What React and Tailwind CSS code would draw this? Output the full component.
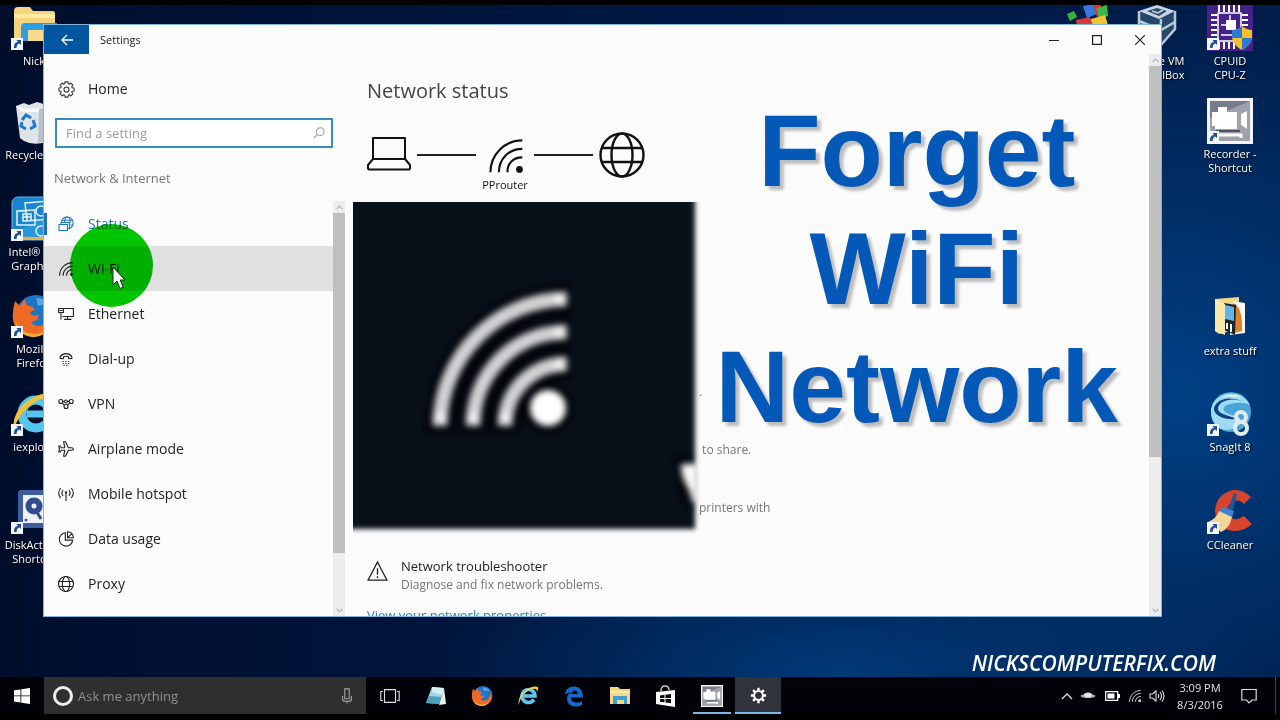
import React from "react";

function WifiIcon({ className, dot = 5, sw = 4 }) {
  return (
    <svg viewBox="0 0 48 48" className={className} fill="none" stroke="currentColor" strokeWidth={sw}>
      <path d="M2 47C2 22 22 2 47 2" />
      <path d="M14 47C14 28 28 14 47 14" />
      <path d="M26 47C26 34 34 26 47 26" />
      <circle cx="43" cy="43" r={dot} fill="currentColor" stroke="none" />
    </svg>
  );
}

function GlobeIcon({ className, sw = 1 }) {
  return (
    <svg viewBox="0 0 46 46" className={className} fill="none" stroke="currentColor" strokeWidth={sw}>
      <circle cx="23" cy="23" r="21.5" />
      <ellipse cx="23" cy="23" rx="10.5" ry="21.5" />
      <path d="M3 16h40M3 30h40" />
    </svg>
  );
}

function GearIcon({ className, teeth = 8, sw = 1.2, hole = 2.6 }) {
  const pts = [];
  for (let i = 0; i < teeth; i++) {
    const a = (i * 2 * Math.PI) / teeth - Math.PI / 2;
    [[-0.3, 5.6], [-0.2, 7.3], [0.2, 7.3], [0.3, 5.6]].forEach(([d, r]) => {
      pts.push(`${(8 + r * Math.cos(a + d)).toFixed(2)},${(8 + r * Math.sin(a + d)).toFixed(2)}`);
    });
  }
  return (
    <svg viewBox="0 0 16 16" className={className} fill="none" stroke="currentColor" strokeWidth={sw} strokeLinejoin="round">
      <polygon points={pts.join(" ")} />
      <circle cx="8" cy="8" r={hole} />
    </svg>
  );
}

function CogIcon({ className }) {
  return (
    <svg viewBox="0 0 20 20" className={className} fill="none" stroke="currentColor">
      <circle cx="10" cy="10" r="5.2" strokeWidth="2.4" />
      <g strokeWidth="2.8">
        <path d="M10 1v3.500M10 15.500V19M1 10h3.500M15.500 10H19" />
        <path d="M3.600 3.600l2.500 2.500M13.900 13.900l2.500 2.500M16.400 3.600l-2.500 2.500M6.100 13.900l-2.500 2.500" />
      </g>
    </svg>
  );
}

const navIcons = {
  status: (
    <svg viewBox="0 0 16 16" className="size-4" fill="none" stroke="currentColor" strokeWidth="1.1">
      <path d="M3.200 6.500C3.800 3.200 6.400 1 9.300 1c3.300 0 5.800 2.500 5.800 5.700 0 2.600-1.200 4.600-3.300 5.500" />
      <path d="M6.300 6.500C6.800 3 8.100 1 9.300 1c1.600 0 3 2.600 3 5.700M4 4.300h10.500M12.500 9h2.200" />
      <path d="M3 6.500h8.500v6H9.500M1 8.500h8.500v6H1zM3 8.500v-2" />
    </svg>
  ),
  wifi: <WifiIcon className="size-3.5" sw={3.8} dot={5} />,
  ethernet: (
    <svg viewBox="0 0 16 16" className="size-4" fill="none" stroke="currentColor" strokeWidth="1.1">
      <path d="M6 2.500h9.400v8H4.500M9.500 10.500V13M6 13.400h7.500" />
      <path d="M.6 2.500h4.800v4H.6zM3 6.500v7M1.600 4.500h2.800" />
    </svg>
  ),
  dialup: (
    <svg viewBox="0 0 16 16" className="size-4" fill="none" stroke="currentColor" strokeWidth="1.1">
      <path d="M2.200 7.400V5.600C3.600 3.600 5.600 2.600 8 2.600s4.400 1 5.800 3v1.800l-3 .2-.4-1.900c-1.500-.5-3.300-.5-4.800 0l-.4 1.900z" />
      <path d="M4.500 10.500h7M4.500 12.500h7M5.500 14.400h5" strokeDasharray="1.200 1.600" />
    </svg>
  ),
  vpn: (
    <svg viewBox="0 0 16 16" className="size-4" fill="none" stroke="currentColor" strokeWidth="1.1">
      <circle cx="2.800" cy="5.500" r="2" />
      <circle cx="13.200" cy="5.500" r="2" />
      <circle cx="8" cy="5.500" r="1.500" />
      <circle cx="8" cy="10.500" r="2" />
      <path d="M5 5.500h1.500M9.500 5.500H11M4.300 7l2.200 2.400M11.700 7 9.500 9.400" />
    </svg>
  ),
  airplane: (
    <svg viewBox="0 0 16 16" className="size-4" fill="none" stroke="currentColor" strokeWidth="1.1" strokeLinejoin="round">
      <path d="M15.400 8c0-.8-.8-1.300-1.800-1.300H10.400L7.500.8H5.600l1.200 5.900H3.400L2.200 5H.7l.8 3-.8 3h1.500l1.200-1.700h3.400l-1.200 5.900h1.900l2.900-5.900h3.200c1 0 1.800-.5 1.800-1.300z" />
    </svg>
  ),
  hotspot: (
    <svg viewBox="0 0 16 16" className="size-4" fill="none" stroke="currentColor" strokeWidth="1.1">
      <path d="M2.700 12C.3 9 .3 5 2.700 2M5 10C3.700 8.200 3.700 5.800 5 4M11 10c1.300-1.800 1.300-4.200 0-6M13.300 12c2.400-3 2.400-7 0-10M8 7v8" />
      <circle cx="8" cy="6.500" r=".6" fill="currentColor" />
    </svg>
  ),
  data: (
    <svg viewBox="0 0 16 16" className="size-4" fill="none" stroke="currentColor" strokeWidth="1.1">
      <path d="M7.300 1.800a6.700 6.700 0 1 0 7.400 7.300H7.300z" />
      <path d="M9.500.8c3.300.3 5.600 2.600 5.900 5.900H9.500zM9.500 6.700l4.300-3.900" />
    </svg>
  ),
  proxy: <GlobeIcon className="size-4" sw={3.2} />,
};

const navItems = [
  ["status", "Status"],
  ["wifi", "Wi-Fi"],
  ["ethernet", "Ethernet"],
  ["dialup", "Dial-up"],
  ["vpn", "VPN"],
  ["airplane", "Airplane mode"],
  ["hotspot", "Mobile hotspot"],
  ["data", "Data usage"],
  ["proxy", "Proxy"],
];

function NavRow({ id, label }) {
  const tone = id === "status" ? "text-[#1f7ac0]" : "text-[#222]";
  const bg = id === "wifi" ? "bg-[#e0e0e0]" : "";
  const marker = id === "status" ? "bg-[#1f6fb5]" : "";
  return (
    <li>
      <a href={"#" + id} className={`flex h-[45px] items-center text-sm ${tone} ${bg}`}>
        <span className={`h-[22px] w-[3px] ${marker}`} />
        <span className="mr-[14px] ml-[11px] flex w-4 justify-center">{navIcons[id]}</span>
        {label}
      </a>
    </li>
  );
}

function Chevron({ up }) {
  return (
    <svg viewBox="0 0 10 6" className="h-[5px] w-[7px]" fill="none" stroke="#888" strokeWidth="1.4">
      <path d={up ? "M1 5l4-4 4 4" : "M1 1l4 4 4-4"} />
    </svg>
  );
}

function ScrollBar({ thumb }) {
  return (
    <div className="flex w-[12px] shrink-0 flex-col items-center bg-[#ececec]">
      <div className="flex h-3 shrink-0 items-center"><Chevron up /></div>
      <div className={`w-full bg-[#bfbfbf] ${thumb}`} />
      <div className="min-h-0 flex-1" />
      <div className="flex h-3 shrink-0 items-center"><Chevron /></div>
    </div>
  );
}

function Sidebar() {
  return (
    <aside className="flex w-[301px] shrink-0 flex-col">
      <a href="#home" className="mt-[23px] flex h-6 items-center gap-[13px] pl-[14px] text-sm text-[#222]">
        <GearIcon className="size-[17px] text-[#333]" sw={1} hole={2.4} />
        Home
      </a>
      <label className="mt-[17px] ml-[11px] flex h-[30px] w-[278px] items-center border-2 border-[#3a8ac4] bg-white pl-[9px]">
        <input type="text" placeholder="Find a setting" aria-label="Find a setting" className="h-6 min-w-0 flex-1 bg-transparent text-[13px] leading-6 outline-none placeholder:text-[#9b9b9b]" />
        <svg viewBox="0 0 14 14" className="mr-1.5 size-3" fill="none" stroke="#999" strokeWidth="1.2">
          <circle cx="8.500" cy="5.500" r="4.500" />
          <path d="M5.300 8.700 1 13" />
        </svg>
      </label>
      <h2 className="mt-[19px] pl-[10px] text-[13px] leading-[22px] text-[#777]">Network &amp; Internet</h2>
      <div className="mt-3 flex min-h-0 flex-1">
        <nav className="min-w-0 flex-1 overflow-hidden">
          <ul>
            {navItems.map(([id, label]) => <NavRow key={id} id={id} label={label} />)}
          </ul>
        </nav>
        <ScrollBar thumb="h-[82%]" />
      </div>
    </aside>
  );
}

function NetworkDiagram() {
  return (
    <div className="mt-[27px] flex items-start text-[#111]">
      <svg viewBox="0 0 44 46" className="h-[46px] w-11" fill="none" stroke="currentColor" strokeWidth="2" strokeLinejoin="round">
        <path d="M6 6h32v21H6z" />
        <path d="M6 27l-5 6v3c0 1 1 1.600 2 1.600h38c1 0 2-.6 2-1.600v-3l-5-6" />
      </svg>
      <div className="mt-[22px] ml-1.5 h-0.5 w-[59px] bg-[#222]" />
      <div className="flex w-[58px] flex-col items-center">
        <div className="flex h-[46px] items-center pl-[2px]"><WifiIcon className="mt-[2px] size-[34px]" sw={3} dot={4.8} /></div>
        <span className="text-[11px] leading-[14px]">PProuter</span>
      </div>
      <div className="mt-[22px] mr-1.5 h-0.5 w-[59px] bg-[#222]" />
      <GlobeIcon className="size-[46px]" sw={2.4} />
    </div>
  );
}

function MainPane() {
  return (
    <main className="min-w-0 flex-1 overflow-hidden pl-[22px]">
      <h1 className="mt-[23px] text-xl leading-7 text-[#444]">Network status</h1>
      <NetworkDiagram />
      <div className="mt-[190px] flex flex-col gap-[38px] pl-[332px] text-xs leading-5 text-[#777]">
        <p>.</p>
        <p>&nbsp;to share.</p>
        <p>printers with</p>
      </div>
      <div className="mt-[39px] flex gap-[13px]">
        <svg viewBox="0 0 22 22" className="mt-[3px] h-[22px] w-[21px]" fill="none" stroke="#222" strokeWidth="1.4">
          <path d="M11 1.500 20.800 20.500H1.200z" />
          <path d="M11 8v7M11 16.500v1.800" />
        </svg>
        <div>
          <h3 className="text-[13px] leading-[19px] text-[#222]">Network troubleshooter</h3>
          <p className="text-xs leading-[18px] text-[#777]">Diagnose and fix network problems.</p>
        </div>
      </div>
      <a href="#properties" className="mt-3 block text-[13px] leading-[18px] text-[#2a80c4]">View your network properties</a>
    </main>
  );
}

function PictureInset() {
  return (
    <div className="absolute top-[177px] left-[309px] h-[333px] w-[348px] overflow-hidden">
      <svg viewBox="0 0 348 333" className="h-full w-full">
        <defs>
          <filter id="soft" x="-20%" y="-20%" width="140%" height="140%" colorInterpolationFilters="sRGB"><feGaussianBlur stdDeviation="3.2" /></filter>
          <filter id="edge" colorInterpolationFilters="sRGB"><feGaussianBlur stdDeviation="2.6" /></filter>
        </defs>
        <path d="M-12-12H342V327H-12z" fill="#08101a" filter="url(#edge)" />
        <g fill="none" filter="url(#soft)">
          <g stroke="#000208" strokeWidth="30">
            <path d="M87 230C87 155 144 97 218 97M120 230C120 172 161 130 218 130M152 230C152 188 180 162 218 162" />
          </g>
          <circle cx="195" cy="206" r="25" fill="#000208" />
          <g stroke="#d2d2d4" strokeWidth="15">
            <path d="M87 224C87 155 144 97 214 97M120 224C120 172 161 130 214 130M152 224C152 188 180 162 214 162" />
          </g>
          <g fill="#f4f4f4">
            <circle cx="87" cy="215" r="5" /><circle cx="120" cy="215" r="5" /><circle cx="152" cy="215" r="5" />
            <circle cx="206" cy="97" r="5" /><circle cx="206" cy="130" r="5" /><circle cx="206" cy="162" r="5" />
          </g>
          <circle cx="195" cy="206" r="18" fill="#fff" />
          <path d="M321 254l16 0v56l-10-18z" fill="#000208" />
          <path d="M328 262h17v38h-6c0-14-11-18-11-38z" fill="#fbfbfb" />
        </g>
      </svg>
    </div>
  );
}

function SettingsWindow() {
  return (
    <section aria-label="Settings" className="absolute top-[19px] right-[118px] bottom-[60px] left-[43px] flex flex-col border border-[#7fb4dc] bg-[#fbfbfb]">
      <header className="flex h-[29px] shrink-0 items-start">
        <button aria-label="Back" className="flex h-[29px] w-[45px] items-center justify-center bg-[#00569f]">
          <svg viewBox="0 0 12 12" className="size-3" fill="none" stroke="#fff" strokeWidth="1.4"><path d="M12 6H1M6 1 1 6l5 5" /></svg>
        </button>
        <span className="ml-[11px] text-[11px] leading-[29px] text-[#222]">Settings</span>
        <div className="ml-auto flex text-[#222]">
          <button aria-label="Minimize" className="flex h-[29px] w-[43px] items-center justify-center"><svg viewBox="0 0 10 10" className="size-2.5" stroke="currentColor"><path d="M0 5.500h10" /></svg></button>
          <button aria-label="Maximize" className="flex h-[29px] w-[43px] items-center justify-center"><svg viewBox="0 0 10 10" className="size-2.5" fill="none" stroke="currentColor" strokeWidth="1.2"><path d="M.6.6h8.800v8.800H.6z" /></svg></button>
          <button aria-label="Close" className="flex h-[29px] w-[43px] items-center justify-center"><svg viewBox="0 0 10 10" className="size-2.5" stroke="currentColor" strokeWidth="1.2"><path d="M0 0l10 10M10 0 0 10" /></svg></button>
        </div>
      </header>
      <div className="relative flex min-h-0 flex-1">
        <Sidebar />
        <MainPane />
        <ScrollBar thumb="h-[391px]" />
        <div className="absolute top-[170px] left-[26px] size-[83px] rounded-full bg-[#00c800] mix-blend-multiply" />
        <svg viewBox="0 0 14 24" className="absolute top-[212px] left-[68px] h-6 w-3.5">
          <path d="M1 1v18l4-4 3 7.500 3.200-1.400L8.200 14H13z" fill="#fff" stroke="#222" />
        </svg>
      </div>
      <PictureInset />
      <p className="absolute top-[67px] right-[43px] text-center text-[102px] leading-[118px] font-bold text-[#0458b8] [font-family:'Liberation_Sans',Arial,sans-serif] [text-shadow:4px_4px_3px_rgba(0,0,0,0.25)]">
        Forget<br />WiFi<br />Network
      </p>
    </section>
  );
}

function Shortcut() {
  return (
    <g>
      <path d="M0 33h12v12H0z" fill="#f4f6fa" />
      <path d="M3 43c0-4 1-5.500 4-6l-1.500-2H10v5l-1.500-1.500C6 39 6 41 5.500 43z" fill="#1d4c9c" />
    </g>
  );
}

const art = {
  nick: (
    <>
      <path d="M3 6q0-4 4-4h12l3 4h20q2 0 2 3v26H3z" fill="#f5d57c" />
      <path d="M3 9h41v4H3z" fill="#ffe9a6" />
      <path d="M10 36V22q0-4 4-4h32v18h-7V25H17v11z" fill="#2f9ee0" />
      <path d="M17 25h22v11H17z" fill="#f8dc8b" />
    </>
  ),
  bin: (
    <>
      <path d="M5 7l8-3 5 2 8-3 13 4-4 36q-12 4-22-1L9 39z" fill="#dfe4e8" />
      <path d="M5 7l10 3 22-1-8 4H11z" fill="#fafafa" />
      <path d="M28 10l11-2-4 34-8 2z" fill="#b9c2cb" />
      <path d="M11 21l4-5 5 3M22 21l2 6-5 3M15 30l-5-3 1-4" fill="none" stroke="#1b79cf" strokeWidth="3" />
    </>
  ),
  intel: (
    <>
      <rect x="1" y="1" width="44" height="43" rx="6" fill="#1b84cf" stroke="#62b3e4" />
      <path d="M1 38q20 2 44-24v30H4z" fill="#e8b34d" />
      <path d="M1 34q20 0 44-24v30q-20 2-44 0z" fill="#2796dc" />
      <g fill="none" stroke="#dff2fd" strokeWidth="1.5">
        <path d="M14 7l24-2v18l-22 2zM6 15l18-1v15H6zM12 18h8v7h-8zM16 18v7M12 21h8" />
        <circle cx="30" cy="15" r="5" /><circle cx="30" cy="35" r="5" />
      </g>
    </>
  ),
  firefox: (
    <>
      <circle cx="25" cy="22" r="20" fill="#1f74c4" />
      <path d="M25 5q10 0 14 8-7-3-12 0z" fill="#53aae0" />
      <path d="M4 8l5 5 5-7 2 7q5-1 8 4-5 1-5 4 5 3 9 0-1 8-8 8 4 6 12 3 7-3 8-14 7 8 0 17-8 9-19 8Q5 42 2 27 1 18 4 8z" fill="#ef6a22" />
      <path d="M4 27q4 12 18 14 12 0 19-10-9 17-25 12Q6 39 4 27z" fill="#f9a834" />
    </>
  ),
  ie: (
    <>
      <circle cx="25" cy="23" r="14" fill="none" stroke="#55c5ee" strokeWidth="9" />
      <path d="M16 23h26" stroke="#55c5ee" strokeWidth="7" />
      <path d="M33 27h12v6H33z" fill="#001334" />
      <path d="M3 39Q0 24 14 12 31-1 43 4q5 4-1 13 2-9-4-10-9-1-21 9Q5 28 3 39z" fill="#f1c13a" />
    </>
  ),
  disk: (
    <>
      <rect x="7" y="1" width="42" height="38" rx="3" fill="#3e5c9e" />
      <path d="M12 6h28v28H12z" fill="#eef2f8" />
      <circle cx="23" cy="17" r="8.500" fill="#304e8e" /><circle cx="23" cy="17" r="2.500" fill="#eef2f8" />
      <path d="M24 20l6 10" stroke="#304e8e" strokeWidth="3" /><circle cx="15" cy="31" r="1.500" fill="#304e8e" />
    </>
  ),
  blocks: (
    <>
      <path d="M2 10l7-3 3 6-7 4z" fill="#35b13d" />
      <path d="M18 2l10-2 4 10-10 4z" fill="#3478dc" />
      <path d="M28 0l7 0 4 11-7 2z" fill="#d8373c" />
      <path d="M32 4l10-3 1 11-9 3z" fill="#3db843" />
      <path d="M26 15l14-4 3 10H26z" fill="#efc332" />
      <path d="M11 16l14-3 3 9H12z" fill="#d8373c" />
    </>
  ),
  vbox: (
    <>
      <path d="M22 0l18 6v18L25 42 5 30V6z" fill="#274769" />
      <path d="M22 0l18 6-16 8L4 6z" fill="#c7d5e2" />
      <path d="M22 3l10 3-8 5-12-5z" fill="#2c4d70" />
      <path d="M17 6l6 2 5-3" stroke="#c7d5e2" strokeWidth="1.5" fill="none" />
      <path d="M4 6v20l21 15 1-27M40 6v18L26 40M4 16l22 9 14-8" fill="none" stroke="#b8c9da" strokeWidth="2.5" />
    </>
  ),
  cpuz: (
    <>
      <path d="M0 0h46v46H0z" fill="#462187" />
      <path d="M12 0v7M17 0v7M22 0v7M27 0v7M32 0v7M12 37v7M17 37v7M22 37v7M27 37v7M4 10h6M4 15h6M4 20h6M4 25h6M4 30h6M35 10h6M35 15h6M35 20h6" stroke="#fff" strokeWidth="2" />
      <path d="M11 8h23v28H11z" fill="none" stroke="#fff" strokeWidth="1.5" />
      <path d="M19 15h10v10H19z" fill="#fff" />
      <path d="M14 30h12v-5M23 10v5M14 20h5" stroke="#fff" strokeWidth="1.5" fill="none" />
      <path d="M35 21q5 4 10 4v8q-2 8-10 12-8-4-10-12v-8q6 0 10-4z" fill="#f4c12d" />
      <path d="M35 21v12H25v-8q6 0 10-4zM35 33h10q-2 8-10 12z" fill="#2c79cf" />
    </>
  ),
  recorder: (
    <>
      <path d="M0 0h46v46H0z" fill="#f5f5f7" />
      <path d="M3 3h40v40H3z" fill="#787b8c" />
      <path d="M3 20L43 3v40H3z" fill="#9fa1ad" />
      <path d="M5 14h6V9h9v5h10v17H8v-3H5zM34 16l6-3v18l-6-4z" fill="#fff" />
      <path d="M9 33h24" stroke="#333744" strokeWidth="1.5" />
      <path d="M12 37h22v3" stroke="#fff" strokeWidth="3" fill="none" />
    </>
  ),
  extra: (
    <>
      <path d="M8 4l24-2v32l-20 5-4-3z" fill="#f2d587" />
      <path d="M26 6l12 2v30l-15 2z" fill="#fafafa" />
      <path d="M26 8q10 4 9 28l-7 2z" fill="#dc8428" />
      <path d="M17 8l12 2-1 30-11-5z" fill="#20252d" />
      <path d="M18 10l9 2v14l-9-2z" fill="#63b4e7" />
      <path d="M20 28v6M24 29v8" stroke="#fff" strokeWidth="2" />
      <path d="M8 4l10 5v31L8 36z" fill="#fae8ae" />
    </>
  ),
  snagit: (
    <>
      <circle cx="24" cy="21" r="20" fill="#4aa4d6" />
      <path d="M6 12Q14 0 30 3q9 3 13 11-6-3-14-2Q14 14 17 20q4 4 13 5 6 3 2 9-9 8-20 3Q3 31 4 18z" fill="#9bdcf4" />
      <path d="M36 10q-14-4-22 2-7 7 2 11 8 3 15 5-12 1-19-3-9-6-2-13 8-8 26-2z" fill="#123f80" />
      <path d="M15 6q10-5 20 1-11-3-20-1z" fill="#fff" />
      <g fill="none" stroke="#e4ebef" strokeWidth="4"><circle cx="34" cy="26" r="5" /><circle cx="34" cy="37" r="6" /></g>
    </>
  ),
  ccleaner: (
    <>
      <path d="M44 8Q36 0 26 1 9 5 8 22q2 19 19 20 11 0 18-7l-8-8q-9 7-15-1-4-10 5-14 6-2 10 3z" fill="#d8452f" />
      <path d="M27 4l3 1-5 20-5-2z" fill="#24569c" />
      <path d="M15 18l12 4-2 7-13-6z" fill="#3b82d4" />
      <path d="M12 22l13 6q-2 11-11 15L1 33q8-3 11-11z" fill="#f3d49b" />
    </>
  ),
};

function DesktopIcon({ id, lines, place, shortcut = true }) {
  return (
    <a href={"#" + id} className={`absolute flex w-20 flex-col items-center ${place}`}>
      <svg viewBox="0 0 46 46" className="size-[46px] shrink-0">
        {art[id]}
        {shortcut && <Shortcut />}
      </svg>
      <span className="mt-[3px] text-center text-[11px] leading-[14px] whitespace-pre text-white [text-shadow:1px_1px_2px_#000]">{lines}</span>
    </a>
  );
}

function Desktop() {
  return (
    <div className="relative min-h-[672px] flex-1 overflow-hidden bg-[radial-gradient(ellipse_400px_400px_at_92%_58%,#004085_0%,rgba(0,56,118,0.7)_45%,rgba(0,30,75,0)_100%),radial-gradient(ellipse_420px_160px_at_66%_100%,#003a78_0%,rgba(0,45,98,0)_100%),linear-gradient(90deg,#000e2c_0%,#00143a_30%,#001a46_65%,#001c48_100%)]">
      <DesktopIcon id="nick" lines={"Nick"} place="top-[0px] left-[-6px]" />
      <DesktopIcon id="bin" lines={"Recycle Bin"} place="top-[94px] left-[-6px]" shortcut={false} />
      <DesktopIcon id="intel" lines={"Intel® HD\nGraphics"} place="top-[191px] left-[-6px]" />
      <DesktopIcon id="firefox" lines={"Mozilla\nFirefox"} place="top-[288px] left-[-6px]" />
      <DesktopIcon id="ie" lines={"iexplore"} place="top-[386px] left-[-6px]" />
      <DesktopIcon id="disk" lines={"DiskActivity\nShortcut"} place="top-[484px] left-[-6px]" />
      <DesktopIcon id="blocks" lines={""} place="top-[-1px] right-[152px]" shortcut={false} />
      <DesktopIcon id="vbox" lines={"Oracle VM\nVirtualBox"} place="top-[0px] right-[82px]" shortcut={false} />
      <DesktopIcon id="cpuz" lines={"CPUID\nCPU-Z"} place="top-[0px] right-[10px]" />
      <DesktopIcon id="recorder" lines={"Recorder -\nShortcut"} place="top-[93px] right-[10px]" />
      <DesktopIcon id="extra" lines={"extra stuff"} place="top-[290px] right-[10px]" shortcut={false} />
      <DesktopIcon id="snagit" lines={"SnagIt 8"} place="top-[386px] right-[10px]" />
      <DesktopIcon id="ccleaner" lines={"CCleaner"} place="top-[484px] right-[10px]" />
      <SettingsWindow />
      <p className="absolute right-[64px] bottom-[-2px] text-[21px] leading-8 font-semibold text-white italic">NICKSCOMPUTERFIX.COM</p>
    </div>
  );
}

const tasks = [
  ["Task View", (
    <svg viewBox="0 0 20 14" className="h-3.5 w-5" fill="none" stroke="#ddd" strokeWidth="1.1"><path d="M4.500.6h11v12.800h-11zM3 2.500H.8v9H3M17 2.500h2.200v9H17" /></svg>
  )],
  ["Notepad", (
    <svg viewBox="0 0 22 22" className="size-[22px]"><path d="M7 2l12 1-5 16-13-1z" fill="#9fd5e4" /><path d="M19 3l2 16-7 1z" fill="#e9f1f4" /><path d="M7 2l12 1-2 7-10-3z" fill="#d7eff5" /><path d="M4 11l12 1-2 7-13-1z" fill="#4ba2b9" /></svg>
  )],
  ["Firefox", <svg viewBox="0 0 46 46" className="size-[22px]">{art.firefox}</svg>],
  ["Internet Explorer", (
    <svg viewBox="0 0 22 22" className="size-[22px]"><path d="M17 14.500A6.500 6.500 0 1 1 18 11H6" fill="none" stroke="#5cc8f2" strokeWidth="3.6" /><path d="M2 20Q0 13 7 7q8-7 14-5 1 2-1 5 0-4-4-3-4 0-9 5-5 6-5 11z" fill="#f0d04a" /></svg>
  )],
  ["Edge", (
    <svg viewBox="0 0 22 22" className="size-[22px]"><path d="M1.500 10Q3 1 12 1.500q8 1 8 11H8q0 5 6 5 3 0 5-1.500v4q-3 1.500-7 1.500-8-1-8-8 0-4 4-6-5 .5-6.500 2.500zM8.500 9h6.300q0-3.500-3-3.500T8.500 9z" fill="#1568cc" /></svg>
  )],
  ["File Explorer", (
    <svg viewBox="0 0 22 20" className="h-5 w-[22px]"><path d="M1 1h8l2 2h10v15H1z" fill="#f6d882" /><path d="M1 5h20v2H1z" fill="#fdeab0" /><path d="M4 18v-7q0-1 1-1h12q1 0 1 1v7h-3v-4H8v4z" fill="#3c9fd8" /></svg>
  )],
  ["Store", (
    <svg viewBox="0 0 22 22" className="size-[22px]"><path d="M1 7l19-2v17L1 19z" fill="#fff" /><path d="M6 6q0-5 4-5t4 4" fill="none" stroke="#ccc" strokeWidth="1.4" /><path d="M5 10.400l4.500-.6V13H5zM10.500 9.700l5.500-.7v4h-5.500zM5 14h4.500v3.300L5 16.700zM10.500 14H16v4.200l-5.500-.7z" fill="#05070d" /></svg>
  )],
  ["Recorder", <svg viewBox="0 0 46 46" className="size-[22px]">{art.recorder}</svg>],
  ["Settings", <CogIcon className="size-[17px] text-white" />],
];

function taskStyle(label) {
  if (label === "Settings") return "w-[46px] border-[#76b9ed] bg-[#30343a]";
  if (label === "Recorder") return "mx-1 w-[38px] border-[#76b9ed]";
  return "w-[46px] border-transparent";
}

function Taskbar() {
  return (
    <footer className="flex h-[37px] shrink-0 items-center bg-[#020308] text-white">
      <button aria-label="Start" className="flex h-full w-11 items-center justify-center">
        <svg viewBox="0 0 16 16" className="size-4" fill="#fff"><path d="M0 2.300 6.500 1.400v6.100H0zM7.300 1.300 16 0v7.500H7.300zM0 8.300h6.500v6.200L0 13.600zM7.300 8.300H16V16l-8.700-1.300z" /></svg>
      </button>
      <label className="mr-px flex h-full w-[322px] items-center bg-[#2f2f2f] pr-[13px] pl-[9px]">
        <span className="size-5 shrink-0 rounded-full border-[3px] border-[#eee]" />
        <input type="text" placeholder="Ask me anything" aria-label="Ask me anything" className="ml-[5px] h-6 min-w-0 flex-1 bg-transparent text-[13px] leading-6 outline-none placeholder:text-[#909090]" />
        <svg viewBox="0 0 12 18" className="h-4 w-3" fill="none" stroke="#a5a5a5" strokeWidth="1.2"><path d="M3.500 1h5v11h-5zM1 9v3q0 3 3 3h4q3 0 3-3V9M6 15v2.500" /></svg>
      </label>
      {tasks.map(([label, icon]) => (
        <button key={label} aria-label={label} className={`flex h-full items-center justify-center border-b-2 pt-0.5 ${taskStyle(label)}`}>
          {icon}
        </button>
      ))}
      <div className="ml-auto flex h-full items-center">
        <svg viewBox="0 0 12 8" className="mr-[7px] h-2 w-3" fill="none" stroke="#ddd" strokeWidth="1.3"><path d="M1 7l5-5 5 5" /></svg>
        <svg viewBox="0 0 16 10" className="mr-[9px] h-2.5 w-4"><ellipse cx="8" cy="5" rx="7.500" ry="2" fill="#aaa" /><ellipse cx="8" cy="4" rx="4" ry="2.500" fill="#e5e5e5" /></svg>
        <svg viewBox="0 0 15 10" className="mr-[9px] h-2.5 w-[15px]"><path d="M.7.7h12v8.600H.7z" fill="none" stroke="#fff" strokeWidth="1.2" /><path d="M2.500 2.500h7v5h-7zM13 3h2v4h-2z" fill="#fff" /></svg>
        <WifiIcon className="mr-2 size-3 text-[#d0d0d0]" sw={4} dot={6} />
        <svg viewBox="0 0 16 14" className="mr-3 h-3.5 w-4" fill="none" stroke="#ddd" strokeWidth="1.1"><path d="M1 5h2.500L7 2v10L3.500 9H1zM9 5q1.500 2 0 4M11 3q3 4 0 8M13 1.500q4 5.500 0 11" /></svg>
        <div className="w-[46px] text-center text-[11px] leading-[17px] whitespace-nowrap text-[#e5e5e5]">3:09 PM<br />8/3/2016</div>
        <button aria-label="Action Center" className="ml-[18px] flex h-full w-4 items-center justify-center">
          <svg viewBox="0 0 16 16" className="size-4" fill="none" stroke="#ddd" strokeWidth="1.2"><path d="M.8 1.500h14.400v10.500h-4L8 15l-2.500-3H.8z" /></svg>
        </button>
        <span className="mr-1 ml-[18px] h-full w-px bg-[#444]" />
      </div>
    </footer>
  );
}

export default function App() {
  return (
    <div className="flex min-h-screen w-full flex-col overflow-hidden bg-black pt-[5px] pb-1.5 [font-family:'Open_Sans','Noto_Sans',sans-serif]">
      <Desktop />
      <Taskbar />
    </div>
  );
}
